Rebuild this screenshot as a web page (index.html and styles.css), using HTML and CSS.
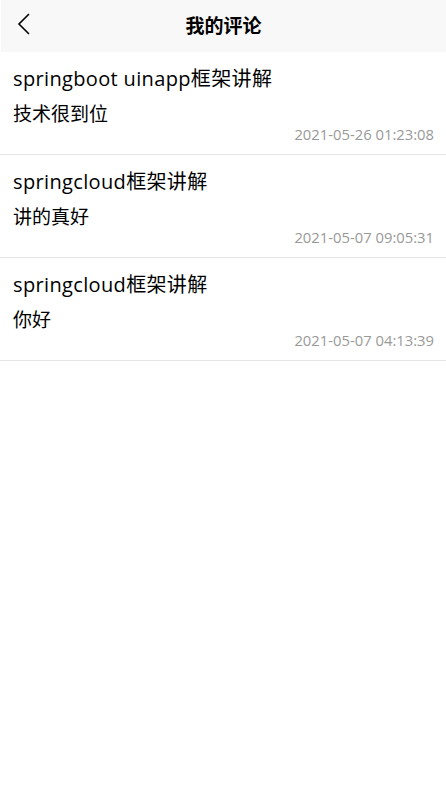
FILE: index.html
```html
<!DOCTYPE html>
<html lang="zh-CN">
<head>
<meta charset="utf-8">
<title>我的评论</title>
<link rel="stylesheet" href="styles.css">
</head>
<body>
<header class="nav">
  <span class="back">
    <svg width="14" height="24" viewBox="0 0 14 24"><path d="M12 2 L2 12 L12 22" fill="none" stroke="#000" stroke-width="1.6"/></svg>
  </span>
  <h1 class="nav-title">我的评论</h1>
</header>
<ul class="list">
  <li class="item">
    <div class="item-title">springboot uinapp框架讲解</div>
    <div class="item-content">技术很到位</div>
    <div class="item-date">2021-05-26 01:23:08</div>
  </li>
  <li class="item">
    <div class="item-title">springcloud框架讲解</div>
    <div class="item-content">讲的真好</div>
    <div class="item-date">2021-05-07 09:05:31</div>
  </li>
  <li class="item">
    <div class="item-title">springcloud框架讲解</div>
    <div class="item-content">你好</div>
    <div class="item-date">2021-05-07 04:13:39</div>
  </li>
</ul>
</body>
</html>
```
FILE: styles.css
```css
html, body {
  margin: 0;
  padding: 0;
  background: #fff;
  font-family: "Open Sans", "Noto Sans CJK SC", sans-serif;
  color: #000;
}
.nav {
  position: relative;
  height: 52px;
  margin-left: 1px;
  background: #f8f8f8;
  display: flex;
  align-items: center;
  justify-content: center;
}
.back {
  position: absolute;
  left: 16px;
  top: 12px;
  display: block;
  line-height: 0;
}
.nav-title {
  margin: 0;
  font-size: 19px;
  font-weight: 700;
  line-height: 52px;
}
.list {
  list-style: none;
  margin: 0;
  padding: 0;
}
.item {
  padding: 13px 12px 10px 13px;
  border-bottom: 1px solid #e5e5e5;
  display: flex;
  flex-direction: column;
}
.item-title {
  font-size: 20px;
  line-height: 28px;
  letter-spacing: 0.35px;
}
.item-content {
  font-size: 19px;
  line-height: 28px;
  margin-top: 7px;
}
.item-date {
  font-size: 14.8px;
  line-height: 20px;
  margin-top: -4px;
  color: #999;
  text-align: right;
}
```
